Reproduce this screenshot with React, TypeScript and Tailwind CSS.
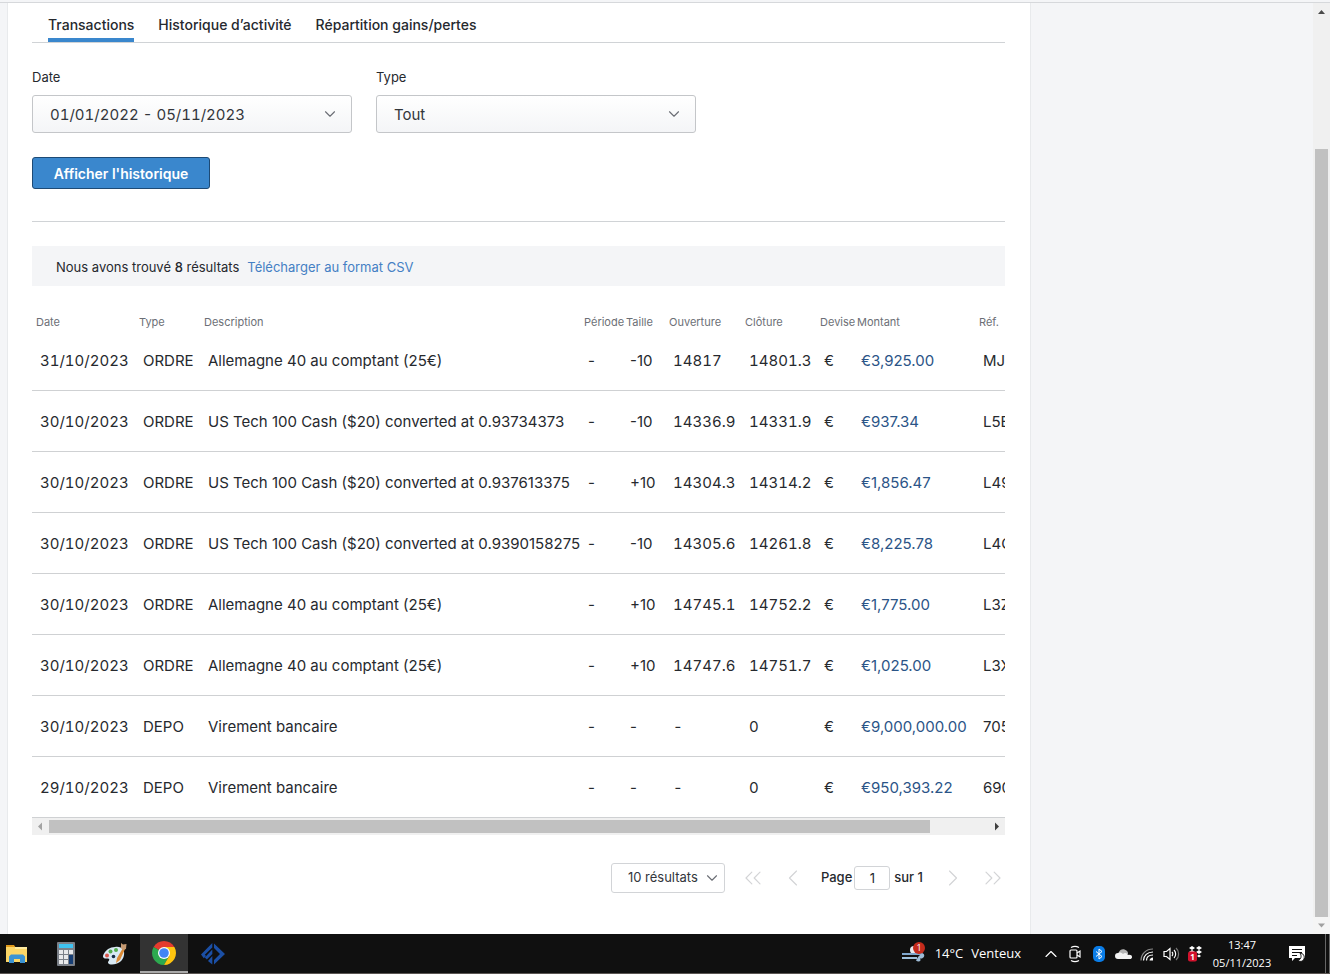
import { ChevronDown, ChevronLeft, ChevronRight, ChevronsLeft, ChevronsRight, ChevronUp } from "lucide-react";

const tabs = ["Transactions", "Historique d’activité", "Répartition gains/pertes"];

const columns = ["Date", "Type", "Description", "Période", "Taille", "Ouverture", "Clôture", "Devise", "Montant", "Réf."];

const rows = [
  ["31/10/2023", "ORDRE", "Allemagne 40 au comptant (25€)", "-", "-10", "14817", "14801.3", "€", "€3,925.00", "MJ6"],
  ["30/10/2023", "ORDRE", "US Tech 100 Cash ($20) converted at 0.93734373", "-", "-10", "14336.9", "14331.9", "€", "€937.34", "L5E"],
  ["30/10/2023", "ORDRE", "US Tech 100 Cash ($20) converted at 0.937613375", "-", "+10", "14304.3", "14314.2", "€", "€1,856.47", "L49"],
  ["30/10/2023", "ORDRE", "US Tech 100 Cash ($20) converted at 0.9390158275", "-", "-10", "14305.6", "14261.8", "€", "€8,225.78", "L4C"],
  ["30/10/2023", "ORDRE", "Allemagne 40 au comptant (25€)", "-", "+10", "14745.1", "14752.2", "€", "€1,775.00", "L3Z"],
  ["30/10/2023", "ORDRE", "Allemagne 40 au comptant (25€)", "-", "+10", "14747.6", "14751.7", "€", "€1,025.00", "L3X"],
  ["30/10/2023", "DEPO", "Virement bancaire", "-", "-", "-", "0", "€", "€9,000,000.00", "705"],
  ["29/10/2023", "DEPO", "Virement bancaire", "-", "-", "-", "0", "€", "€950,393.22", "690"],
];

// one entry per column
const cellStyles = ["tabular-nums", "", "", "", "", "tabular-nums", "tabular-nums", "", "text-[#2b5487]", ""];

function Field({ id, label, value }: { id: string; label: string; value: string }) {
  return (
    <div className="w-80">
      <label htmlFor={id} className="block text-[13px] leading-4">{label}</label>
      <div className="relative mt-2.5">
        <select
          id={id}
          className="block h-[38px] w-full appearance-none rounded-[3px] border border-[#c4c6c9] bg-linear-to-b from-white to-[#f4f5f7] px-[17px] pt-0.5 text-[15px] text-[#33363b] tabular-nums"
        >
          <option>{value}</option>
        </select>
        <ChevronDown className="pointer-events-none absolute top-2.5 right-[13px] size-[18px] text-[#6b6e75]" strokeWidth={1.5} />
      </div>
    </div>
  );
}

function HistoryTable() {
  return (
    <div className="overflow-hidden">
      <table className="w-[1040px] table-fixed border-collapse text-left whitespace-nowrap">
        <colgroup>
          <col className="w-[103px]" />
          <col className="w-[65px]" />
          <col className="w-[380px]" />
          <col className="w-[42px]" />
          <col className="w-[43px]" />
          <col className="w-[76px]" />
          <col className="w-[75px]" />
          <col className="w-[37px]" />
          <col className="w-[122px]" />
          <col />
        </colgroup>
        <thead>
          <tr>
            {columns.map((c) => (
              <th key={c} className="h-[43px] pt-[29px] pl-1 text-[11px] leading-[14px] font-normal text-[#6c6f76]">{c}</th>
            ))}
          </tr>
        </thead>
        <tbody>
          {rows.map((row, r) => (
            <tr key={r} className="h-[61px] border-b border-[#cfd1d3]">
              {row.map((cell, i) => (
                <td key={i} className={`pt-1 pl-2 ${cellStyles[i]}`}>{cell}</td>
              ))}
            </tr>
          ))}
        </tbody>
      </table>
      <div className="flex h-[17px] items-center bg-[#f0f0f0]">
        <svg viewBox="0 0 17 17" className="size-[17px] shrink-0 fill-[#a3a3a3]"><path d="M6 8.500l4-4v8z" /></svg>
        <div className="h-[13px] grow-[881] bg-[#c1c1c1]" />
        <div className="grow-[58]" />
        <svg viewBox="0 0 17 17" className="size-[17px] shrink-0 fill-[#404040]"><path d="M11 8.500l-4-4v8z" /></svg>
      </div>
    </div>
  );
}

function Pagination() {
  return (
    <div className="mt-7 flex h-[30px] items-center justify-end text-[13px] font-medium">
      <div className="relative mr-[14px]">
        <select aria-label="Résultats par page" className="block h-[30px] w-[114px] appearance-none rounded-[3px] border border-[#d2d4d7] bg-white pl-4 font-normal text-[#33363b]">
          <option>10 résultats</option>
        </select>
        <ChevronDown className="pointer-events-none absolute top-1.5 right-1 size-[18px] text-[#6b6e75]" strokeWidth={1.5} />
      </div>
      <button aria-label="Première page" className="text-[#d3d4d6]"><ChevronsLeft className="size-7" strokeWidth={1} /></button>
      <button aria-label="Page précédente" className="ml-3 text-[#d3d4d6]"><ChevronLeft className="size-7" strokeWidth={1} /></button>
      <label htmlFor="page" className="ml-[14px]">Page</label>
      <input id="page" defaultValue="1" className="mr-1 ml-0.5 h-6 w-9 rounded-[3px] border border-[#d2d4d7] text-center font-normal" />
      <span>sur 1</span>
      <button aria-label="Page suivante" className="ml-4 text-[#d3d4d6]"><ChevronRight className="size-7" strokeWidth={1} /></button>
      <button aria-label="Dernière page" className="-mr-0.5 ml-3 text-[#d3d4d6]"><ChevronsRight className="size-7" strokeWidth={1} /></button>
    </div>
  );
}

function WindowScrollbar() {
  return (
    <div className="flex w-[17px] shrink-0 flex-col items-center bg-[#f0f0f0]">
      <svg viewBox="0 0 17 17" className="size-[17px] shrink-0 fill-[#4a4a4a]"><path d="M5 11l3.500-4 3.500 4z" /></svg>
      <div className="grow-[129]" />
      <div className="w-[13px] grow-[768] bg-[#c1c1c1]" />
      <svg viewBox="0 0 17 17" className="size-[17px] shrink-0 bg-[#f5f5f5] fill-[#a0a0a0]"><path d="M5 6.500h7l-3.500 4z" /></svg>
    </div>
  );
}

function FolderIcon() {
  return (
    <svg viewBox="0 0 24 20" className="h-5 w-6">
      <path d="M1 1h8l2 3H1z" fill="#e0991b" />
      <path d="M1 3h21v15H1z" fill="#fbd667" />
      <path d="M10 3h12v2H10z" fill="#fdeaa0" />
      <path d="M4 19v-6.500l2-2h12l2 2V19h-5v-4H9v4z" fill="#3b93d3" />
    </svg>
  );
}

function CalculatorIcon() {
  return (
    <svg viewBox="0 0 18 24" className="h-6 w-[18px]">
      <rect width="18" height="24" rx="1" fill="#7b8088" />
      <rect x="2" y="2" width="14" height="4" fill="#3fc3f1" />
      {[8, 13, 18].map((y) => (
        <g key={y}>
          <rect x="2" y={y} width="4" height="4" fill="#e8e9eb" />
          <rect x="7" y={y} width="4" height="4" fill="#e8e9eb" />
        </g>
      ))}
      <rect x="12" y="8" width="4" height="4" fill="#e8e9eb" />
      <rect x="12" y="13" width="4" height="9" fill="#173e74" />
    </svg>
  );
}

function PaintIcon() {
  return (
    <svg viewBox="0 0 26 24" className="h-6 w-[26px]">
      <path d="M13 5c7-1 10 3 9 8-1 6-6 9.500-12 9.500-4 0-5-2-3-4 1-2-1-2-3-2-3 0-3.500-2-2.500-4C3.500 8 8 5 13 5z" fill="#d9e9f3" />
      <circle cx="5" cy="13.500" r="2" fill="#d9574b" />
      <circle cx="8.500" cy="9.500" r="2" fill="#54ad50" />
      <circle cx="14" cy="8" r="2" fill="#54ad50" />
      <circle cx="11.500" cy="14.500" r="1.800" fill="#162c45" />
      <path d="M14 21l1-5 6-10 2 1-5 11z" fill="#dc8a35" />
      <path d="M19 1l2 1.500L24.500 2 24 7l-3 1-2-2z" fill="#c59a72" />
    </svg>
  );
}

function ChromeIcon() {
  return (
    <svg viewBox="0 0 24 24" className="size-6">
      <path d="M12 12L1.608 6A12 12 0 0 1 22.392 6z" fill="#e33b2e" />
      <path d="M12 12L1.608 6A12 12 0 0 0 12 24l5.200-9z" fill="#2da94f" />
      <path d="M12 6h10.392A12 12 0 0 1 12 24l5.200-9z" fill="#fdc40f" />
      <circle cx="12" cy="12" r="6" fill="#fff" />
      <circle cx="12" cy="12" r="4.800" fill="#4285f4" />
    </svg>
  );
}

function BrokerIcon() {
  return (
    <svg viewBox="0 0 24 22" className="h-[22px] w-6" fill="#1b4fa5">
      <path d="M11.300 0v4.500l-7.500 7.200 1.300 1.300-2.300 2.300L0 11.500z" />
      <path d="M11.300 6.500v4.500l-5.500 5.500-2-2z" />
      <path d="M11.300 13v8.500L7 18z" />
      <path d="M13 0.500L24 11 13 21.500v-4.500l6-6-6-6z" />
    </svg>
  );
}

function WeatherIcon() {
  return (
    <svg viewBox="0 0 26 24" className="h-6 w-[26px]">
      <circle cx="13" cy="8" r="4" fill="#e6e9ef" />
      <path d="M1 12h20" stroke="#7fa6cc" strokeWidth="2" />
      <path d="M1 16h15" stroke="#9ec0dc" strokeWidth="2" />
      <path d="M21 11c3 1 3 4 0 5.500h-2c2 3-2 4-4 2l2-3.500z" fill="#9dbbd6" />
      <circle cx="18" cy="6" r="6" fill="#c42b1c" />
      <text x="18" y="9" fontSize="9" textAnchor="middle" fill="#fff">1</text>
    </svg>
  );
}

function MeetIcon() {
  return (
    <svg viewBox="0 0 16 18" className="h-[18px] w-4" fill="none" stroke="#fff" strokeWidth="1.200">
      <rect x="3" y="5" width="7" height="8" rx="1" />
      <path d="M10 8l3-2v6l-3-2M4 2.500c2.500-1.500 5.500-1.500 8 0M4 15.500c2.500 1.500 5.500 1.500 8 0" />
    </svg>
  );
}

function BluetoothIcon() {
  return (
    <svg viewBox="0 0 12 16" className="h-4 w-3">
      <rect width="12" height="16" rx="5" fill="#0a7de8" />
      <path d="M3 5.500l6 5-3 2.500V3l3 2.500-6 5" fill="none" stroke="#fff" strokeWidth="1" />
    </svg>
  );
}

function CloudIcon() {
  return (
    <svg viewBox="0 0 17 12" className="h-3 w-[17px]">
      <path d="M4 4c1-3 5-4 8-1 1 1 1 2 1 3L4 10z" fill="#b4b4b4" />
      <path d="M3 11a3 3 0 0 1 0-6c2-1 4 0 5 1 2-2 4-1 5 1 5-1 5 4 2 4z" fill="#f2f2f2" />
    </svg>
  );
}

function WifiIcon() {
  return (
    <svg viewBox="0 0 16 16" className="size-4" fill="none" strokeWidth="1.200">
      <path d="M2 14.500C2 8 7 3 14 3" stroke="#8b8b8b" />
      <path d="M4.500 14.500C4.500 9.500 8.500 6 14 6M7.500 14.500C7.500 11 10 9 14 9" stroke="#fff" />
      <path d="M10.500 14.500c0-1.500 1.500-3 3.500-3v3z" fill="#fff" />
    </svg>
  );
}

function SoundIcon() {
  return (
    <svg viewBox="0 0 17 16" className="h-4 w-[17px]" fill="none" stroke="#fff" strokeWidth="1.200">
      <path d="M1 5.500h2.500L7 2.500v11l-3.500-3H1z" />
      <path d="M9 6c1 1 1 3 0 4M11 4c2.200 2 2.200 6 0 8" />
      <path d="M13 2c3.500 3 3.500 9 0 12" stroke="#777" />
    </svg>
  );
}

function DropboxIcon() {
  return (
    <svg viewBox="0 0 17 17" className="size-[17px]">
      <path d="M5 1l3 2-3 2-3-2zM12 1l3 2-3 2-3-2zM5 5l3 2-3 2-3-2zM12 5l3 2-3 2-3-2zM12 9.500l2 1.500-2 1.500-2-1.500z" fill="#fff" />
      <rect x="1" y="6.500" width="9" height="10" rx="2" fill="#d3122d" />
      <text x="5.500" y="14.500" fontSize="8" fontWeight="700" textAnchor="middle" fill="#fff">1</text>
    </svg>
  );
}

function NotificationIcon() {
  return (
    <svg viewBox="0 0 18 18" className="size-[18px]">
      <path d="M1 1h16v12H7l-3 3v-3H1z" fill="#fff" />
      <path d="M4 4.500h10M4 7.500h10M4 10.500h5" stroke="#101010" strokeWidth="1.100" />
      <path d="M12 8c3 0 5 3 4 6s-5 3-6 1c3 0 4-4 2-7z" fill="#fff" stroke="#101010" strokeWidth="1" />
    </svg>
  );
}

const tray = [MeetIcon, BluetoothIcon, CloudIcon, WifiIcon, SoundIcon, DropboxIcon];

function Taskbar() {
  return (
    <footer className="flex h-10 shrink-0 border-b border-[#5a5552] bg-[#101010] font-['Open_Sans',sans-serif] text-white">
      <button aria-label="Explorateur" className="w-[42px] pl-[5px]"><FolderIcon /></button>
      <button aria-label="Calculatrice" className="flex w-12 items-center justify-center"><CalculatorIcon /></button>
      <button aria-label="Paint" className="flex w-[50px] items-center justify-center"><PaintIcon /></button>
      <button aria-label="Chrome" className="flex w-12 items-center justify-center border-b-2 border-[#a9a9a9] bg-[#333333]"><ChromeIcon /></button>
      <button aria-label="Plateforme" className="flex w-[50px] items-center justify-center"><BrokerIcon /></button>
      <div className="ml-auto flex items-center">
        <button className="mr-[18px] flex items-center gap-2 text-[13px]">
          <WeatherIcon />
          <span>14°C</span>
          <span>Venteux</span>
        </button>
        <button aria-label="Icônes cachées" className="flex w-6 justify-center"><ChevronUp className="size-5" strokeWidth={1.4} /></button>
        {tray.map((Icon, i) => (
          <span key={i} className="flex w-6 justify-center"><Icon /></span>
        ))}
        <div className="w-[70px] text-center text-[11px] leading-[18px]">
          <div>13:47</div>
          <div>05/11/2023</div>
        </div>
        <button aria-label="Notifications" className="flex w-10 justify-center"><NotificationIcon /></button>
        <div className="ml-2 h-full w-[5px] border-x border-[#666]" />
      </div>
    </footer>
  );
}

export default function App() {
  return (
    <div className="flex min-h-screen flex-col bg-[#f4f5f7] pt-0.5 font-[Inter,sans-serif] text-[15px] text-[#26292e]">
      <div className="flex grow border-t border-[#d6d8db]">
        <main className="ml-[7px] min-w-0 grow border-x border-[#e8eaec] bg-white pr-[25px] pl-6">
          <nav className="flex gap-6 border-b border-[#d0d3d6] pl-4">
            {tabs.map((tab, i) => (
              <a
                key={tab}
                href="#"
                className={
                  i === 0
                    ? "border-b-4 border-[#3a87cd] pt-[13px] pb-1 text-[14px] leading-[18px] font-medium"
                    : "border-b-4 border-transparent pt-[13px] pb-1 text-[14px] leading-[18px] font-medium"
                }
              >
                {tab}
              </a>
            ))}
          </nav>

          <form onSubmit={(e) => e.preventDefault()} className="border-b border-[#d0d3d6] pt-[26px] pb-8">
            <div className="flex gap-6">
              <Field id="date" label="Date" value="01/01/2022 - 05/11/2023" />
              <Field id="type" label="Type" value="Tout" />
            </div>
            <button type="submit" className="mt-6 block h-8 w-[178px] rounded-[3px] border border-[#1d4a75] bg-[#3a87cd] text-[14px] font-semibold text-white">
              Afficher l'historique
            </button>
          </form>

          <div className="mt-6 flex h-10 items-center gap-2 bg-[#f4f5f7] px-6 pt-1 text-[13px]">
            <span>Nous avons trouvé <span className="font-medium">8</span> résultats</span>
            <a href="#" className="text-[#4480c4]">Télécharger au format CSV</a>
          </div>

          <HistoryTable />
          <Pagination />
        </main>
        <aside className="w-[282px] shrink-0" />
        <WindowScrollbar />
      </div>
      <Taskbar />
    </div>
  );
}
